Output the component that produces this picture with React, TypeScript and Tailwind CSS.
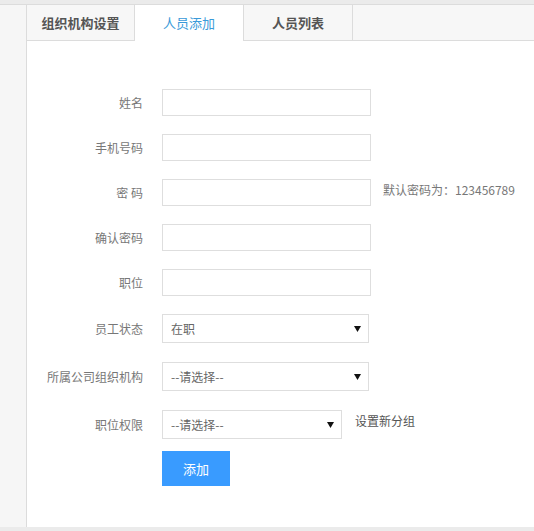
import type { ReactNode } from "react";

const FONT = { fontFamily: '"Noto Sans CJK SC", "Noto Sans", sans-serif' };

const TABS = [
  { label: "组织机构设置", active: false, w: "w-[108px]" },
  { label: "人员添加", active: true, w: "w-[109px]" },
  { label: "人员列表", active: false, w: "w-[109px]" },
];

function Row({ label, children, gap = "mb-[18px]" }: { label: string; children: ReactNode; gap?: string }) {
  return (
    <div className={`flex items-start ${gap}`}>
      <label className="w-[116px] shrink-0 self-center text-right text-[12px] text-[#777]">{label}</label>
      <div className="ml-[19px] flex items-start">{children}</div>
    </div>
  );
}

function TextInput() {
  return <input className="h-[27px] w-[209px] border border-[#dedede] bg-white px-2 text-[12px] outline-none" />;
}

function Select({ value, width, options }: { value: string; width: string; options: string[] }) {
  return (
    <div className={`relative ${width}`}>
      <select
        defaultValue={value}
        className="h-[29px] w-full appearance-none border border-[#dedede] bg-white pl-[8px] text-[12px] text-[#666] outline-none"
      >
        {options.map((o) => (
          <option key={o}>{o}</option>
        ))}
      </select>
      <svg className="pointer-events-none absolute right-[8px] top-[12px]" width="7" height="6" viewBox="0 0 7 6">
        <path d="M0 0h7L3.5 6z" fill="#111" />
      </svg>
    </div>
  );
}

export default function App() {
  return (
    <div className="flex h-[531px] w-[534px] flex-col bg-[#ebebeb] pt-[4px] pb-[4px]" style={FONT}>
      <div className="flex flex-1 border-t border-[#dcdcdc]">
        <aside className="w-[27px] shrink-0 border-r border-[#dcdcdc] bg-[#f6f6f6]" />
        <main className="flex flex-1 flex-col bg-white">
          <nav className="flex h-[36px] border-b border-[#dcdcdc] bg-[#f7f7f7]">
            {TABS.map((t) => (
              <div
                key={t.label}
                className={`flex ${t.w} items-center justify-center border-r border-[#dcdcdc] text-[13px] ${
                  t.active ? "-mb-px bg-white text-[#3a9ad9]" : "font-bold text-[#555]"
                }`}
              >
                {t.label}
              </div>
            ))}
          </nav>

          <form className="flex flex-col pt-[48px]" onSubmit={(e) => e.preventDefault()}>
            <Row label="姓名">
              <TextInput />
            </Row>
            <Row label="手机号码">
              <TextInput />
            </Row>
            <Row label="密 码">
              <TextInput />
              <span className="ml-[12px] mt-[2px] text-[12px] leading-[18px] text-[#777]">默认密码为：123456789</span>
            </Row>
            <Row label="确认密码">
              <TextInput />
            </Row>
            <Row label="职位">
              <TextInput />
            </Row>
            <Row label="员工状态" gap="mb-[19px]">
              <Select value="在职" width="w-[207px]" options={["在职", "离职"]} />
            </Row>
            <Row label="所属公司组织机构" gap="mb-[19px]">
              <Select value="--请选择--" width="w-[207px]" options={["--请选择--"]} />
            </Row>
            <Row label="职位权限" gap="mb-[12px]">
              <Select value="--请选择--" width="w-[180px]" options={["--请选择--"]} />
              <a className="ml-[13px] mt-[2px] cursor-pointer text-[12px] leading-[18px] text-[#555]">设置新分组</a>
            </Row>
            <div className="ml-[135px]">
              <button type="submit" className="h-[35px] w-[68px] bg-[#399bff] text-[13px] text-white">
                添加
              </button>
            </div>
          </form>
        </main>
      </div>
    </div>
  );
}
